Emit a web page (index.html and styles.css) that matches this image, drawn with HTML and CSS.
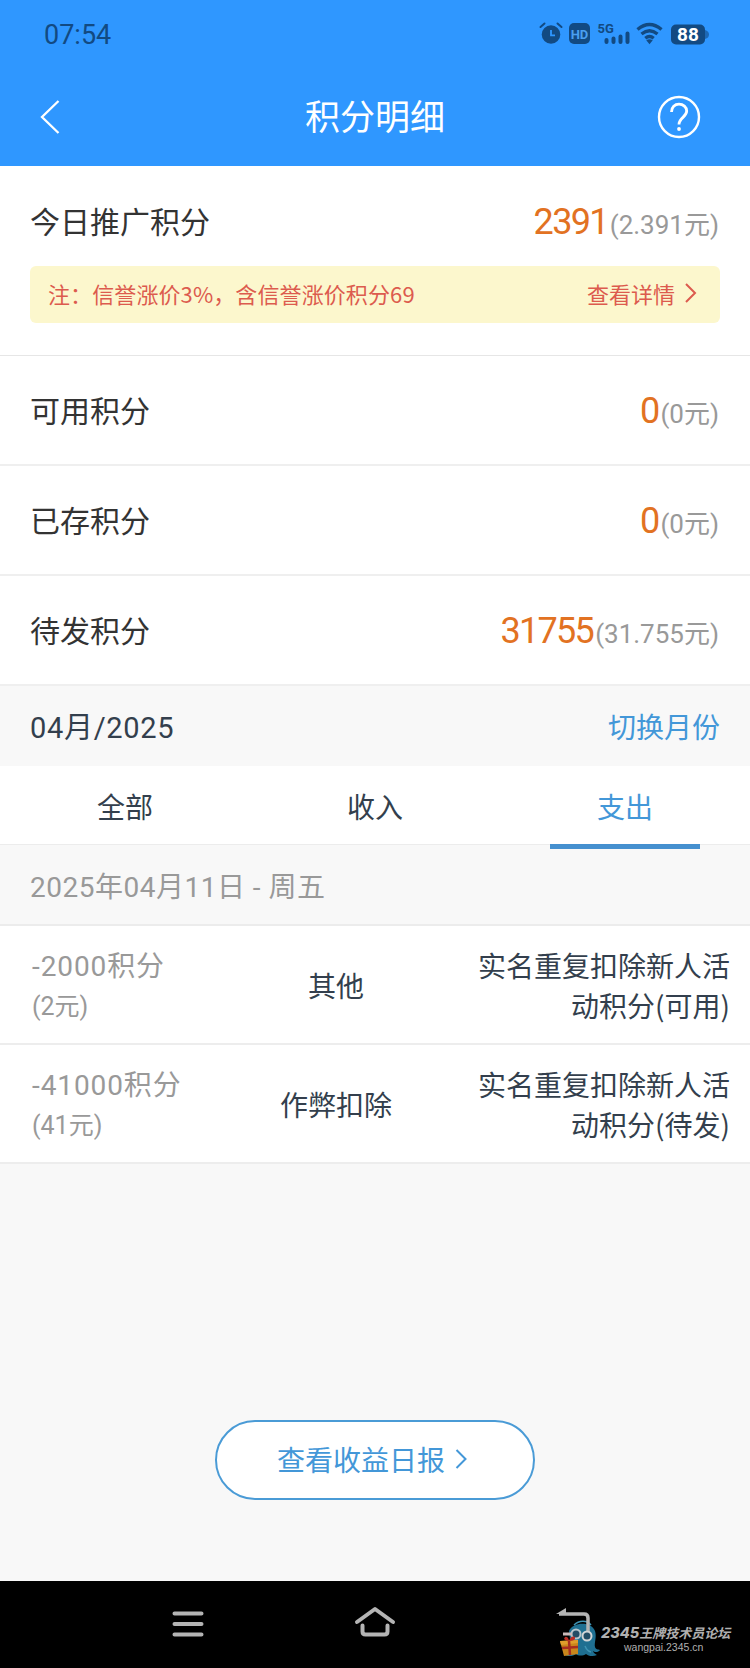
FILE: index.html
```html
<!DOCTYPE html>
<html lang="zh-CN">
<head>
<meta charset="UTF-8">
<meta name="viewport" content="width=device-width, initial-scale=1.0">
<title>积分明细</title>
<link rel="stylesheet" href="styles.css">
</head>
<body>

<header class="top">
    <div class="status-bar">
        <span class="time">07:54</span>
        <svg class="status-icons" width="174" height="30" viewBox="0 0 174 30" fill="#124a82">
            <!-- alarm -->
            <circle cx="12" cy="14.5" r="9.3"/>
            <path d="M1.5 7l4-3.500M22.500 7l-4-3.500" stroke="#124a82" stroke-width="2" stroke-linecap="round"/>
            <path d="M12 10v5.300h4" fill="none" stroke="#2f97ff" stroke-width="1.800"/>
            <!-- hd -->
            <rect x="30" y="3" width="21" height="21" rx="5"/>
            <text x="40.500" y="18.500" class="hd">HD</text>
            <!-- signal -->
            <text x="58.500" y="13" class="net">5G</text>
            <g stroke="#124a82" stroke-width="4" stroke-linecap="round">
                <path d="M67.500 20v2M74.500 18.500v3.500M81.500 16.500v5.500M88.500 13.500v8.500"/>
            </g>
            <!-- wifi -->
            <g fill="none" stroke="#124a82" stroke-width="3.400">
                <path d="M98.500 9.500q12-10 24 0M102.500 14q8-6.500 16 0M106.300 18.200q4.200-3.400 8.400 0"/>
            </g>
            <path d="M107.300 20.300q3.200-2.200 6.400 0l-3.200 4z"/>
            <!-- battery -->
            <rect x="132" y="4.500" width="34" height="20" rx="5"/>
            <path d="M166 10q4 1 4 4.500t-4 4.500z" opacity="0.6"/>
            <text x="149" y="21" class="battery">88</text>
        </svg>
    </div>
    <div class="nav-bar">
        <svg width="24" height="40" viewBox="0 0 24 40" fill="none" stroke="#fff" stroke-width="2.300">
            <path d="M19.500 4L3 20l16.500 16"/>
        </svg>
        <h1 class="title">积分明细</h1>
        <svg width="44" height="44" viewBox="0 0 44 44" fill="none" stroke="#fff">
            <circle cx="22" cy="22" r="20" stroke-width="2.400"/>
            <path d="M14.500 17c0-5 3.300-7.800 7.500-7.800s7.700 2.800 7.700 6.900c0 5.800-7.700 6.900-7.700 13.300" stroke-width="2.800"/>
            <circle cx="22" cy="34" r="1.900" fill="#fff" stroke="none"/>
        </svg>
    </div>
</header>

<section class="today">
    <div class="row">
        <span class="label">今日推广积分</span>
        <span class="value"><b>2391</b>(2.391元)</span>
    </div>
    <div class="notice">
        <span class="notice-text">注：信誉涨价3%，含信誉涨价积分69</span>
        <a class="detail"><span>查看详情</span>
            <svg width="14" height="22" viewBox="0 0 14 22" fill="none" stroke="#dc5b4e" stroke-width="2">
                <path d="M2 2l9 9-9 9"/>
            </svg>
        </a>
    </div>
</section>

<div class="row item">
    <span class="label">可用积分</span>
    <span class="value"><b>0</b>(0元)</span>
</div>
<div class="row item">
    <span class="label">已存积分</span>
    <span class="value"><b>0</b>(0元)</span>
</div>
<div class="row item">
    <span class="label">待发积分</span>
    <span class="value"><b>31755</b>(31.755元)</span>
</div>

<div class="month">
    <span class="month-text">04月/2025</span>
    <a class="switch">切换月份</a>
</div>

<div class="tabs">
    <div class="tab">全部</div>
    <div class="tab">收入</div>
    <div class="tab active">支出</div>
</div>

<div class="date">2025年04月11日 - 周五</div>

<div class="record">
    <div class="points">-2000积分<small>(2元)</small></div>
    <div class="type">其他</div>
    <div class="reason">实名重复扣除新人活动积分(可用)</div>
</div>
<div class="record">
    <div class="points">-41000积分<small>(41元)</small></div>
    <div class="type">作弊扣除</div>
    <div class="reason">实名重复扣除新人活动积分(待发)</div>
</div>

<div class="report">
    <a class="report-btn"><span>查看收益日报</span>
        <svg width="13" height="22" viewBox="0 0 13 22" fill="none" stroke="#4397d8" stroke-width="2">
            <path d="M1.500 2l9 9-9 9"/>
        </svg>
    </a>
</div>

<footer class="system-nav">
    <div class="key">
        <svg width="40" height="40" viewBox="0 0 40 40" stroke="#b4b4b4" stroke-width="4" stroke-linecap="round">
            <path d="M6.500 10.500h27M6.500 21h27M6.500 31.500h27"/>
        </svg>
    </div>
    <div class="key">
        <svg width="44" height="40" viewBox="0 0 44 40" fill="none" stroke="#b4b4b4" stroke-width="4" stroke-linecap="round" stroke-linejoin="round">
            <path d="M4 19L22 6l18 13M9.500 22.500v6q0 3 3 3h19q3 0 3-3v-6"/>
        </svg>
    </div>
    <div class="key"></div>
    <div class="watermark">
        <svg width="44" height="56" viewBox="0 0 44 56" fill="none">
            <path d="M13 24c4-9 22-10 26 0 2 6-1 12 0 16 1 3 3 2 5 3-2 3-6 2-7 1 1 3 3 3 4 4-4 2-9 1-11-1-3 2-8 2-10 0-2 2-8 3-11 1 4-1 6-4 6-8z" fill="#1f6f91"/>
            <path d="M18 18c5-5 13-5 17 0M29 39q2 5 6 6" stroke="#3f93b3" stroke-width="1.500"/>
            <path d="M3 7h25q4 0 4 4v18" stroke="#b4b4b4" stroke-width="3.500"/>
            <path d="M0 7l10-6v6z" fill="#b4b4b4"/>
            <circle cx="20" cy="27" r="4.500" fill="#234d66" stroke="#b5c5cc" stroke-width="2"/>
            <circle cx="31" cy="29" r="4.500" fill="#234d66" stroke="#d1d4d6" stroke-width="2"/>
            <path d="M7 27h9" stroke="#c8b8b8" stroke-width="3"/>
            <path d="M4 34l18-1v14L8 49z" fill="#c8861c"/>
            <path d="M4 34l18-1v3L5 38z" fill="#df9d2c"/>
            <path d="M13 34l1 14M6 41l16-1" stroke="#a82d20" stroke-width="2.500"/>
            <path d="M13 34q-7-1-4-4 3-1 4 4 2-6 6-4 1 4-6 4" fill="#b92c24"/>
        </svg>
        <div class="watermark-text">
            <em><i>2345</i>王牌技术员论坛</em>
            <span>wangpai.2345.cn</span>
        </div>
    </div>
</footer>

</body>
</html>
```
FILE: styles.css
```css
* {
    box-sizing: border-box;
    margin: 0;
    padding: 0;
}

body {
    display: flex;
    flex-direction: column;
    width: 750px;
    height: 1668px;
    background: #f8f8f8;
    color: #333f4d;
    font-family: "Noto Sans CJK SC", sans-serif;
    font-size: 28px;
    line-height: 40px;
    overflow: hidden;
}

svg {
    display: block;
    flex: none;
}

.time, .value, .month-text, .date, .points {
    font-family: Roboto, "Noto Sans CJK SC", sans-serif;
}

.top {
    height: 166px;
    background: #2f97ff;
}

.status-bar {
    display: flex;
    justify-content: space-between;
    align-items: center;
    height: 70px;
    padding: 0 37px 0 44px;
}

.time {
    color: #124a82;
    font-size: 27px;
}

.status-icons text {
    font-family: Roboto, sans-serif;
    font-weight: 700;
}

.status-icons .hd {
    font-size: 13px;
    fill: #4a9ff0;
    text-anchor: middle;
}

.status-icons .net {
    font-size: 13px;
}

.status-icons .battery {
    font-size: 19px;
    fill: #fff;
    text-anchor: middle;
}

.nav-bar {
    display: flex;
    justify-content: space-between;
    align-items: center;
    height: 94px;
    padding: 0 49px 0 39px;
}

.title {
    padding-left: 30px;
    padding-bottom: 4px;
    color: #fff;
    font-size: 35px;
    font-weight: 400;
}

.today {
    height: 190px;
    background: #fff;
    border-bottom: 1px solid #e6e6e6;
}

.row {
    display: flex;
    justify-content: space-between;
    align-items: center;
    height: 110px;
    padding: 0 31px 0 30px;
}

.today .row {
    height: 100px;
    padding-top: 7px;
}

.item {
    padding-bottom: 2px;
    background: #fff;
    border-bottom: 2px solid #efefef;
}

.label {
    color: #333;
    font-size: 30px;
}

.value {
    padding-top: 7px;
    color: #999;
    font-size: 26px;
}

.value b {
    margin-right: 2px;
    color: #e27222;
    font-size: 36px;
    font-weight: 400;
    letter-spacing: -1.7px;
}

.notice {
    display: flex;
    justify-content: space-between;
    align-items: center;
    height: 57px;
    margin: 0 30px;
    padding: 0 22px 3px 18px;
    border-radius: 6px;
    background: #fcf7cd;
    color: #dc5b4e;
    font-size: 22px;
}

.notice-text {
    letter-spacing: 0.1px;
}

.detail {
    display: flex;
    align-items: center;
    gap: 9px;
}

.month {
    display: flex;
    justify-content: space-between;
    align-items: center;
    height: 80px;
    padding: 0 30px 1px;
}

.month-text {
    padding-top: 5px;
    font-size: 29px;
    letter-spacing: 0.7px;
}

.switch {
    color: #4397d8;
}

.tabs {
    display: flex;
    height: 79px;
    background: #fff;
    border-bottom: 1px solid #ececec;
}

.tab {
    position: relative;
    flex: 1;
    line-height: 80px;
    text-align: center;
}

.active {
    color: #4397d8;
}

.active::after {
    content: "";
    position: absolute;
    left: 50px;
    right: 50px;
    bottom: -5px;
    height: 5px;
    background: #4590cf;
}

.date {
    height: 81px;
    padding-left: 30px;
    border-bottom: 2px solid #ececec;
    color: #999;
    line-height: 85px;
    letter-spacing: 0.5px;
}

.record {
    display: grid;
    grid-template-columns: 225px 222px 1fr;
    align-items: center;
    height: 119px;
    padding-right: 20px;
    background: #fff;
    border-bottom: 2px solid #ededed;
}

.points {
    padding-top: 5px;
    padding-left: 32px;
    color: #999;
    letter-spacing: 0.9px;
}

.points small {
    display: block;
    font-size: 25px;
    letter-spacing: 0;
}

.type {
    text-align: center;
}

.reason {
    padding-left: 20px;
    text-align: right;
}

.report {
    display: flex;
    justify-content: center;
    margin-top: 256px;
}

.report-btn {
    display: flex;
    justify-content: center;
    align-items: center;
    gap: 10px;
    width: 320px;
    height: 80px;
    padding: 0 5px 2px 0;
    border: 2px solid #4a9bd6;
    border-radius: 40px;
    background: #fff;
    color: #4397d8;
}

.system-nav {
    position: relative;
    display: flex;
    justify-content: center;
    height: 87px;
    margin-top: auto;
    padding: 0 94px 3px;
    background: #000;
}

.key {
    display: flex;
    flex: 1;
    justify-content: center;
    align-items: center;
}

/* forum mark over the back key */
.watermark {
    position: absolute;
    left: 556px;
    top: 26px;
    display: flex;
    gap: 1px;
}

.watermark-text {
    padding-top: 17px;
    color: #b0b0b0;
    white-space: nowrap;
}

.watermark em {
    display: block;
    font-size: 13px;
    font-weight: 700;
    line-height: 18px;
}

.watermark i {
    font-family: Inter, sans-serif;
    font-size: 14.5px;
    font-weight: 800;
}

.watermark span {
    display: block;
    padding-left: 23px;
    font-family: "Liberation Sans", sans-serif;
    font-size: 10.5px;
    line-height: 11px;
}
```
